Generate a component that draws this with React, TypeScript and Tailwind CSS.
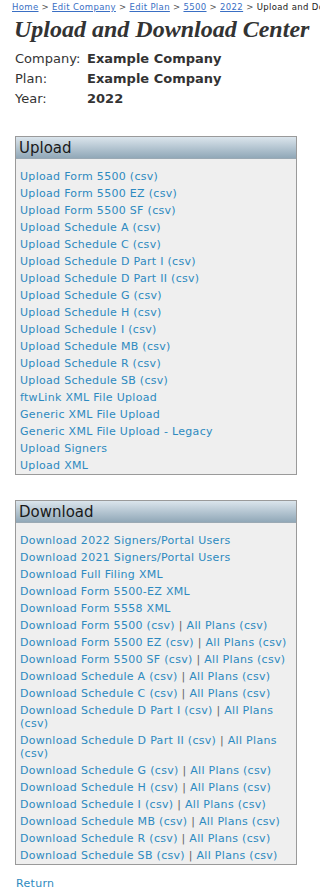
import React from 'react';

const uploads = [
  'Upload Form 5500 (csv)',
  'Upload Form 5500 EZ (csv)',
  'Upload Form 5500 SF (csv)',
  'Upload Schedule A (csv)',
  'Upload Schedule C (csv)',
  'Upload Schedule D Part I (csv)',
  'Upload Schedule D Part II (csv)',
  'Upload Schedule G (csv)',
  'Upload Schedule H (csv)',
  'Upload Schedule I (csv)',
  'Upload Schedule MB (csv)',
  'Upload Schedule R (csv)',
  'Upload Schedule SB (csv)',
  'ftwLink XML File Upload',
  'Generic XML File Upload',
  'Generic XML File Upload - Legacy',
  'Upload Signers',
  'Upload XML',
];

const downloadsSimple = [
  'Download 2022 Signers/Portal Users',
  'Download 2021 Signers/Portal Users',
  'Download Full Filing XML',
  'Download Form 5500-EZ XML',
  'Download Form 5558 XML',
];

const downloadsCsv = [
  'Form 5500',
  'Form 5500 EZ',
  'Form 5500 SF',
  'Schedule A',
  'Schedule C',
  'Schedule D Part I',
  'Schedule D Part II',
  'Schedule G',
  'Schedule H',
  'Schedule I',
  'Schedule MB',
  'Schedule R',
  'Schedule SB',
];

const crumbs = ['Home', 'Edit Company', 'Edit Plan', '5500', '2022'];

const Panel = ({ title, children }: { title: string; children: React.ReactNode }) => (
  <div className="ml-[15px] w-[282px] border border-[#9a9a9a] bg-[#efefef]">
    <div className="h-[22px] border-b border-[#9aa9b4] bg-gradient-to-b from-[#dbe5ec] to-[#91a8b8] pl-[3px] text-[15px] leading-[22px] text-[#1a1a1a]">
      {title}
    </div>
    <ul className="pl-[4px] pr-[4px] pt-[9px] tracking-[0.3px]">{children}</ul>
  </div>
);

const App = () => {
  return (
    <div className="w-[320px] h-[893px] overflow-hidden bg-white font-['DejaVu_Sans',Verdana,sans-serif] text-[#333]">
      {/* Breadcrumb */}
      <div className="whitespace-nowrap pl-[12px] pt-[1px] text-[8.5px] leading-[12px] tracking-[0.35px] text-[#222]">
        {crumbs.map((c) => (
          <React.Fragment key={c}>
            <a href="#" className="text-[#3a6fc4] underline">{c}</a>
            <span className="text-[#555]"> &gt; </span>
          </React.Fragment>
        ))}
        <span>Upload and Download Center</span>
      </div>

      <h1 className="ml-[14px] mt-[2px] font-['Liberation_Serif',serif] text-[24px] font-bold italic leading-[28px] text-[#333]">
        Upload and Download Center
      </h1>

      {/* Company info */}
      <div className="ml-[15px] mt-[6px] text-[13px] leading-[20px]">
        <div className="flex">
          <span className="w-[72px]">Company:</span>
          <span className="font-bold">Example Company</span>
        </div>
        <div className="flex">
          <span className="w-[72px]">Plan:</span>
          <span className="font-bold">Example Company</span>
        </div>
        <div className="flex">
          <span className="w-[72px]">Year:</span>
          <span className="font-bold">2022</span>
        </div>
      </div>

      <div className="mt-[27px]">
        <Panel title="Upload">
          {uploads.map((u) => (
            <li key={u} className="py-[2px] text-[11px] leading-[13px]">
              <a href="#" className="text-[#2d8ac0]">{u}</a>
            </li>
          ))}
        </Panel>
      </div>

      <div className="mt-[25px]">
        <Panel title="Download">
          {downloadsSimple.map((d) => (
            <li key={d} className="py-[2px] text-[11px] leading-[13px]">
              <a href="#" className="text-[#2d8ac0]">{d}</a>
            </li>
          ))}
          {downloadsCsv.map((d) => (
            <li key={d} className="py-[2px] text-[11px] leading-[13px]">
              <a href="#" className="text-[#2d8ac0]">Download {d} (csv)</a>
              <span className="text-[#666]"> | </span>
              <a href="#" className="text-[#2d8ac0]">All Plans (csv)</a>
            </li>
          ))}
        </Panel>
      </div>

      <div className="ml-[16px] mt-[12px] text-[11px] leading-[13px] tracking-[0.3px]">
        <a href="#" className="text-[#2d8ac0]">Return</a>
      </div>
    </div>
  );
};

export default App;
